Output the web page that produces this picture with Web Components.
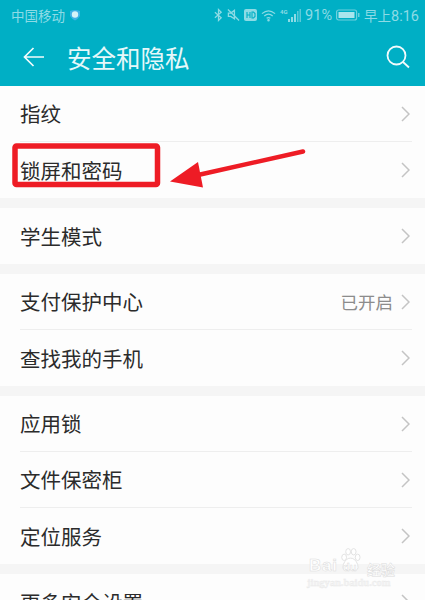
<!DOCTYPE html>
<html lang="zh">
<head>
<meta charset="utf-8">
<style>
  html, body { margin: 0; padding: 0; height: 600px; overflow: hidden; background: #f5f5f5; }
  body { font-family: "Noto Sans CJK SC", "Roboto", sans-serif; position: relative; }
</style>
</head>
<body>
<status-bar></status-bar>
<title-bar>安全和隐私</title-bar>
<menu-group>
  <menu-row>指纹</menu-row>
  <menu-row last>锁屏和密码</menu-row>
</menu-group>
<menu-group>
  <menu-row last>学生模式</menu-row>
</menu-group>
<menu-group>
  <menu-row value="已开启">支付保护中心</menu-row>
  <menu-row last>查找我的手机</menu-row>
</menu-group>
<menu-group>
  <menu-row>应用锁</menu-row>
  <menu-row>文件保密柜</menu-row>
  <menu-row last>定位服务</menu-row>
</menu-group>
<menu-group>
  <menu-row last>更多安全设置</menu-row>
</menu-group>
<red-callout></red-callout>
<baidu-mark></baidu-mark>

<script>
/**
 * Status bar
 */
class StatusBar extends HTMLElement {
  constructor() {
    super();
    this.attachShadow({ mode: 'open' });
    this.shadowRoot.innerHTML = `
      <style>
        :host {
          display: flex;
          height: 30px;
          padding: 0 6px 0 11px;
          align-items: center;
          background: #00afc5;
          color: #8ddbe5;
          font-size: 13.5px;
        }
        .dot { margin-left: 4px; }
        .right { margin-left: auto; display: flex; align-items: center; gap: 4px; }
        svg { display: block; }
        .num { font-family: Roboto, sans-serif; font-size: 14.5px; }
      </style>
      <span>中国移动</span>
      <svg class="dot" width="12" height="12" viewBox="0 0 12 12">
        <path d="M1 2 Q6 0 11 2 V7 Q9 10 6 11.500 Q3 10 1 7Z" fill="#3fb2e6"/>
        <circle cx="6" cy="5.500" r="3.200" fill="#d6f2f8"/>
      </svg>
      <div class="right">
        <svg width="9" height="14" viewBox="0 0 10 14" fill="none" stroke="#8ddbe5" stroke-width="1.400">
          <path d="M1 4 L8 10 L5 13 V1 L8 4 L1 10"/>
        </svg>
        <svg width="13" height="14" viewBox="0 0 14 14" fill="none" stroke="#8ddbe5" stroke-width="1.400">
          <path d="M1.500 5 H4 L8 2 V11 L4 8.500 H1.500Z"/><path d="M1 1 L13 13"/>
        </svg>
        <svg width="13" height="12" viewBox="0 0 13 12">
          <rect width="13" height="12" rx="2" fill="#8ddbe5"/>
          <path d="M3 3 V9 M6 3 V9 M3 6 H6 M8 3 V9 H9.500 L11 7.500 V4.500 L9.500 3Z" fill="none" stroke="#00afc5" stroke-width="1.100"/>
        </svg>
        <svg width="15" height="13" viewBox="0 0 16 13" fill="none" stroke="#8ddbe5" stroke-width="1.300">
          <path d="M1 4.500 Q8 -1.500 15 4.500"/><path d="M3.500 7 Q8 3 12.500 7"/><path d="M6 9.500 Q8 8 10 9.500"/>
          <circle cx="8" cy="11.500" r="0.700" fill="#8ddbe5"/>
        </svg>
        <svg width="21" height="15" viewBox="0 0 21 15">
          <text x="0" y="5.500" font-size="6" font-family="Roboto" font-weight="700" fill="#8ddbe5">4G</text>
          <path d="M8 11h2v3H8zM11 9h2v5h-2zM14 6h2v8h-2z" fill="#8ddbe5"/>
          <path d="M17 3h1.500v11H17zM19.500 1H21v13h-1.500z" fill="#5cc9d8"/>
        </svg>
        <span class="num">91%</span>
        <svg width="24" height="12" viewBox="0 0 24 12">
          <rect x="0.600" y="1" width="20" height="10" rx="2" fill="none" stroke="#6fd0dd" stroke-width="1.200"/>
          <rect x="2.500" y="3" width="16" height="6" fill="#a9e5ed"/>
          <rect x="22" y="4" width="1.500" height="4" fill="#6fd0dd"/>
        </svg>
        <span>早上<span class="num">8:16</span></span>
      </div>
    `;
  }
}
customElements.define('status-bar', StatusBar);

/**
 * Title bar, the title comes in through the slot
 */
class TitleBar extends HTMLElement {
  constructor() {
    super();
    this.attachShadow({ mode: 'open' });
    this.shadowRoot.innerHTML = `
      <style>
        :host {
          display: flex;
          height: 56px;
          padding: 0 15px 0 23px;
          align-items: center;
          box-sizing: border-box;
          background: #00afc5;
          color: #e6f8fa;
          font-size: 24.500px;
        }
        .title { margin-left: 23px; margin-top: -2px; }
        svg { display: block; margin-top: -2px; }
        .search { margin-left: auto; }
      </style>
      <svg width="21" height="22" viewBox="0 0 21 22" fill="none" stroke="#f2fbfc" stroke-width="1.700">
        <path d="M21 11 H1.500 M10.500 2 L1.500 11 L10.500 20"/>
      </svg>
      <span class="title"><slot></slot></span>
      <svg class="search" width="24" height="24" viewBox="0 0 24 24" fill="none" stroke="#f2fbfc" stroke-width="1.800">
        <circle cx="10.500" cy="10.500" r="9"/><path d="M17 17 L23 22.500"/>
      </svg>
    `;
  }
}
customElements.define('title-bar', TitleBar);

/**
 * White block of rows, with the gray gap below it
 */
class MenuGroup extends HTMLElement {
  constructor() {
    super();
    this.attachShadow({ mode: 'open' });
    this.shadowRoot.innerHTML = `
      <style>
        :host { display: block; background: #fdfdfd; margin-bottom: 10px; }
      </style>
      <slot></slot>
    `;
  }
}
customElements.define('menu-group', MenuGroup);

/**
 * Single row: label, optional value, chevron
 */
class MenuRow extends HTMLElement {
  constructor() {
    super();
    this.attachShadow({ mode: 'open' });
    const value = this.getAttribute('value');
    this.shadowRoot.innerHTML = `
      <style>
        :host {
          display: flex;
          height: 56px;
          margin: 0 13px 0 20px;
          padding-right: 2px;
          align-items: center;
          box-sizing: border-box;
          color: #2b2b2b;
          font-size: 20.500px;
          border-bottom: 1px solid #eeeeee;
        }
        :host([last]) { border-bottom: none; }
        .label { margin-top: -1px; }
        .value { margin-left: auto; color: #8c8c8c; font-size: 17.500px; margin-right: 8px; margin-top: -1px; }
        svg { display: block; }
        .chev { margin-left: auto; }
        .value + .chev { margin-left: 0; }
      </style>
      <span class="label"><slot></slot></span>
      ${value ? `<span class="value">${value}</span>` : ''}
      <svg class="chev" width="9" height="16" viewBox="0 0 9 16" fill="none" stroke="#c4c4c4" stroke-width="1.500">
        <path d="M1 1 L8 8 L1 15"/>
      </svg>
    `;
  }
}
customElements.define('menu-row', MenuRow);

/**
 * Red box and arrow painted over the screenshot
 */
class RedCallout extends HTMLElement {
  constructor() {
    super();
    this.attachShadow({ mode: 'open' });
    this.shadowRoot.innerHTML = `
      <style>
        :host { position: absolute; left: 0; top: 130px; width: 320px; height: 70px; display: block; }
        svg { display: block; }
      </style>
      <svg width="320" height="70" viewBox="0 0 320 70">
        <rect x="15" y="16" width="142.500" height="38.500" rx="1.500" fill="none" stroke="#ee1c25" stroke-width="5.500"/>
        <path d="M303 21.500 L198 45" fill="none" stroke="#ee1c25" stroke-width="4.500" stroke-linecap="round"/>
        <path d="M170 51.500 L198 32 L203 57.500Z" fill="#ee1c25"/>
      </svg>
    `;
  }
}
customElements.define('red-callout', RedCallout);

/**
 * Faint watermark in the lower right corner
 */
class BaiduMark extends HTMLElement {
  constructor() {
    super();
    this.attachShadow({ mode: 'open' });
    this.shadowRoot.innerHTML = `
      <style>
        :host {
          position: absolute; left: 300px; top: 545px; width: 125px; height: 50px;
          display: block; color: #fff;
          font-family: "Liberation Sans", sans-serif;
          -webkit-text-stroke: 0.5px #dcdcdc;
        }
        span { position: absolute; white-space: nowrap; }
        .brand { left: 9px; top: 12px; font-size: 17px; font-weight: 700; line-height: 18px; letter-spacing: 0.8px; }
        .du { left: 43px; top: 16px; font-size: 11px; font-weight: 700; line-height: 12px; }
        .jy { left: 67px; top: 16px; font: 700 14px/16px "Noto Sans CJK SC", sans-serif; }
        .site { left: 7px; top: 32px; font: 700 10.500px/12px "Liberation Serif", serif; color: #f4f4f4; -webkit-text-stroke: 0.3px #e8e8e8; }
        svg { position: absolute; left: 38px; top: 2px; }
      </style>
      <svg width="25" height="27" viewBox="0 0 26 34" fill="#fff" stroke="#dcdcdc" stroke-width="1">
        <ellipse cx="5" cy="13" rx="3" ry="4"/><ellipse cx="10" cy="6" rx="3" ry="4"/>
        <ellipse cx="17" cy="6" rx="3" ry="4"/><ellipse cx="22" cy="13" rx="3" ry="4"/>
        <path d="M13 14 Q19 14 22 22 Q24 30 18 29 Q13 28 8 29 Q2 30 4 22 Q7 14 13 14Z"/>
      </svg>
      <span class="brand">Bai</span>
      <span class="du">du</span>
      <span class="jy">经验</span>
      <span class="site">jingyan.baidu.com</span>
    `;
  }
}
customElements.define('baidu-mark', BaiduMark);
</script>
</body>
</html>
